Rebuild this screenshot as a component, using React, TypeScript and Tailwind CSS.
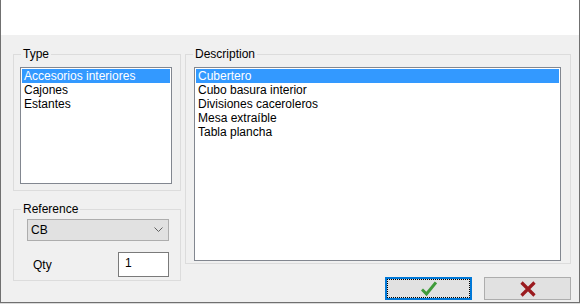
const TYPES = ['Accesorios interiores', 'Cajones', 'Estantes'];
const DESCRIPTIONS = ['Cubertero', 'Cubo basura interior', 'Divisiones caceroleros', 'Mesa extraíble', 'Tabla plancha'];

function GroupBox({ label, className, children }: { label: string; className: string; children: React.ReactNode }) {
  return (
    <div className={`relative border border-[#dcdcdc] ${className}`}>
      <span className="absolute -top-[8px] left-[7px] px-[2px] bg-[#f0f0f0] leading-[14px] text-black">{label}</span>
      {children}
    </div>
  );
}

function ListBox({ items, className }: { items: string[]; className: string }) {
  return (
    <div className={`border border-[#828790] bg-white p-[1px] ${className}`}>
      {items.map((item, i) => (
        <div
          key={item}
          className={`h-[14px] leading-[14px] pl-[2px] whitespace-nowrap ${i === 0 ? 'bg-[#3399ff] text-white' : 'text-black'}`}
        >
          {item}
        </div>
      ))}
    </div>
  );
}

export default function App() {
  return (
    <div className="w-[580px] h-[304px] bg-[#dadada] text-[12px] font-['Liberation_Sans',Arial,sans-serif]">
      <div className="w-[580px] h-[303px] flex flex-col border-x border-b border-[#707070] bg-[#f0f0f0]">
        {/* Title area */}
        <div className="h-[35px] bg-white shrink-0" />

        <div className="flex pl-[12px] pt-[19px]">
          {/* Left column */}
          <div className="w-[168px] flex flex-col">
            <GroupBox label="Type" className="h-[137px] pl-[6px] pt-[12px]">
              <ListBox items={TYPES} className="w-[152px] h-[117px]" />
            </GroupBox>

            <GroupBox label="Reference" className="mt-[18px] h-[72px] pl-[13px] pt-[9px]">
              <div className="w-[142px] h-[22px] flex items-center justify-between border border-[#adadad] bg-[#e1e1e1] pl-[3px] pr-[5px]">
                <span className="leading-[14px]">CB</span>
                <svg width="9" height="6" viewBox="0 0 9 6" fill="none" stroke="#606060" strokeWidth="1">
                  <path d="M0.5 0.5 L4.5 4.5 L8.5 0.5" />
                </svg>
              </div>
              <div className="w-[142px] mt-[11px] flex items-center justify-between">
                <span className="ml-[6px] leading-[14px]">Qty</span>
                <div className="w-[51px] h-[25px] border border-[#7a7a7a] bg-white pl-[6px] pt-[3px] leading-[14px]">1</div>
              </div>
            </GroupBox>
          </div>

          {/* Right column */}
          <div className="ml-[4px] w-[386px] flex flex-col">
            <GroupBox label="Description" className="h-[210px] pl-[8px] pt-[12px]">
              <ListBox items={DESCRIPTIONS} className="w-[367px] h-[194px]" />
            </GroupBox>

            <div className="mt-[13px] flex justify-end gap-[12px]">
              <button type="button" className="w-[87px] h-[23px] border-2 border-[#0078d7] bg-[#e1e1e1] flex items-center justify-center">
                <div className="w-full h-full border border-dotted border-black flex items-center justify-center">
                  <svg width="16" height="15" viewBox="0 0 16 15" fill="none" stroke="#3f9b3a" strokeWidth="3" strokeLinecap="square">
                    <path d="M2 9.5 L5.5 13 L14 2.5" />
                  </svg>
                </div>
              </button>
              <button type="button" className="w-[87px] h-[23px] border border-[#adadad] bg-[#e1e1e1] flex items-center justify-center">
                <svg width="16" height="16" viewBox="0 0 16 16" fill="none" stroke="#9b1b1f" strokeWidth="3.2">
                  <path d="M1.5 1.5 L14.5 14.5 M14.5 1.5 L1.5 14.5" />
                </svg>
              </button>
            </div>
          </div>
        </div>
      </div>
    </div>
  );
}
